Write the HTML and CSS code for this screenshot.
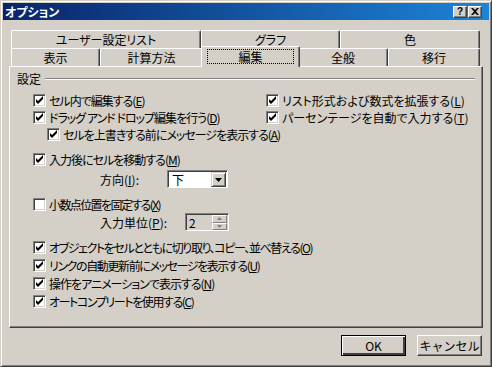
FILE: index.html
```html
<!DOCTYPE html>
<html lang="ja">
<head>
    <meta charset="UTF-8">
    <title>オプション</title>
    <link rel="stylesheet" href="styles.css">
</head>
<body>

    <div class="window">
        <!-- Barra de título -->
        <div class="titlebar">
            <span class="title">オプション</span>
            <div class="caption-buttons">
                <span class="cap-btn">?</span>
                <span class="cap-btn">
                    <svg width="8" height="7" viewBox="0 0 8 7"><path d="M0 0h2l2 2 2-2h2L5 3.5 8 7H6L4 5 2 7H0l3-3.5z" fill="#000"/></svg>
                </span>
            </div>
        </div>

        <!-- Pestañas -->
        <div class="tabs">
            <div class="tab-row">
                <div class="tab w190">ユーザー設定リスト</div>
                <div class="tab w139">グラフ</div>
                <div class="tab w140">色</div>
            </div>
            <div class="tab-row">
                <div class="tab w89">表示</div>
                <div class="tab w103">計算方法</div>
                <div class="tab w95 activa"><span class="foco">編集</span></div>
                <div class="tab w90">全般</div>
                <div class="tab w92">移行</div>
            </div>
        </div>

        <!-- Panel principal -->
        <div class="panel">
            <div class="grupo">
                <span>設定</span>
                <div class="linea"></div>
            </div>

            <div class="arriba">
                <div class="col-izq">
                    <div class="fila"><span class="check on"></span>セル内で編集する(<u>E</u>)</div>
                    <div class="fila"><span class="check on"></span>ドラッグ アンド ドロップ編集を行う(<u>D</u>)</div>
                    <div class="fila sangria"><span class="check on"></span>セルを上書きする前にメッセージを表示する(<u>A</u>)</div>
                </div>
                <div class="col-der">
                    <div class="fila"><span class="check on"></span>リスト形式および数式を拡張する(<u>L</u>)</div>
                    <div class="fila"><span class="check on"></span>パーセンテージを自動で入力する(<u>T</u>)</div>
                </div>
            </div>

            <div class="fila mt8"><span class="check on"></span>入力後にセルを移動する(<u>M</u>)</div>
            <div class="campo mt2">
                <span class="etiqueta e67">方向(<u>I</u>):</span>
                <div class="combo">
                    <span class="combo-valor">下</span>
                    <span class="combo-btn">
                        <svg width="7" height="4" viewBox="0 0 7 4"><path d="M0 0h7L3.5 4z" fill="#000"/></svg>
                    </span>
                </div>
            </div>

            <div class="fila mt8 muy-apretado"><span class="check"></span>小数点位置を固定する(<u>X</u>)</div>
            <div class="campo">
                <span class="etiqueta e85">入力単位(<u>P</u>):</span>
                <div class="spin">
                    <span class="spin-valor">2</span>
                    <div class="spin-btns">
                        <span class="spin-btn"><svg width="5" height="3" viewBox="0 0 5 3"><path d="M2.5 0L5 3H0z" fill="#808080"/></svg></span>
                        <span class="spin-btn"><svg width="5" height="3" viewBox="0 0 5 3"><path d="M0 0h5L2.5 3z" fill="#808080"/></svg></span>
                    </div>
                </div>
            </div>

            <div class="lista mt7">
                <div class="fila apretado"><span class="check on"></span>オブジェクトをセルとともに切り取り、コピー、並べ替える(<u>O</u>)</div>
                <div class="fila apretado"><span class="check on"></span>リンクの自動更新前にメッセージを表示する(<u>U</u>)</div>
                <div class="fila"><span class="check on"></span>操作をアニメーションで表示する(<u>N</u>)</div>
                <div class="fila apretado"><span class="check on"></span>オートコンプリートを使用する(<u>C</u>)</div>
            </div>
        </div>

        <!-- Botones -->
        <div class="botones">
            <button class="boton defecto">OK</button>
            <button class="boton">キャンセル</button>
        </div>
    </div>

</body>
</html>
```

FILE: styles.css
```css
body {
    margin: 0;
    font-family: "Noto Sans CJK JP", "Liberation Sans", sans-serif;
    font-size: 12px;
    font-feature-settings: "palt";
    color: #000;
}
.window {
    width: 492px;
    height: 367px;
    box-sizing: border-box;
    background-color: #d4d0c8;
    border: 1px solid;
    border-color: #d4d0c8 #404040 #404040 #d4d0c8;
    box-shadow: inset 1px 1px #fff, inset -1px -1px #808080;
    padding: 2px;
    display: flex;
    flex-direction: column;
}
.titlebar {
    height: 17px;
    display: flex;
    align-items: center;
    justify-content: space-between;
    background: linear-gradient(to right, #0a246a, #1c84d8);
}
.title {
    color: #fff;
    font-weight: bold;
    padding-left: 2px;
    line-height: 17px;
}
.caption-buttons {
    display: flex;
    margin-right: 7px;
    gap: 1px;
}
.cap-btn {
    width: 14px;
    height: 12px;
    box-sizing: border-box;
    background-color: #d4d0c8;
    border: 1px solid;
    border-color: #fff #404040 #404040 #fff;
    box-shadow: inset -1px -1px #808080;
    display: flex;
    align-items: center;
    justify-content: center;
    font-family: "Liberation Sans", sans-serif;
    font-weight: bold;
    font-size: 10px;
    line-height: 10px;
}
.tabs {
    margin: 10px 0 0 8px;
}
.tab-row {
    display: flex;
    height: 18px;
}
.tab {
    box-sizing: border-box;
    height: 18px;
    border-top: 1px solid #fff;
    border-left: 1px solid #fff;
    border-right: 1px solid #404040;
    box-shadow: inset -1px 0 #808080;
    border-radius: 2px 2px 0 0;
    text-align: center;
    line-height: 17px;
}
.w190 { width: 190px; }
.w139 { width: 139px; }
.w140 { width: 140px; }
.w89 { width: 89px; }
.w103 { width: 103px; }
.w95 { width: 95px; }
.w90 { width: 90px; }
.w92 { width: 92px; }
.tab.activa {
    position: relative;
    z-index: 1;
    width: 99px;
    height: 21px;
    margin: -2px -2px -1px -2px;
    background-color: #d4d0c8;
    padding: 2px 5px 0 5px;
}
.foco {
    display: block;
    border: 1px dotted #000;
    line-height: 13px;
}
.panel {
    width: 474px;
    height: 262px;
    box-sizing: border-box;
    margin-left: 6px;
    border: 1px solid;
    border-color: #fff #404040 #404040 #fff;
    box-shadow: inset -1px -1px #808080;
    padding: 5px 0 0 7px;
}
.grupo {
    display: flex;
    align-items: center;
    height: 14px;
    line-height: 14px;
}
.linea {
    flex: 1;
    margin: 0 7px 0 4px;
    border-top: 1px solid #808080;
    border-bottom: 1px solid #fff;
}
.arriba {
    display: flex;
    margin-top: 6px;
}
.col-izq {
    width: 249px;
}
.fila {
    display: flex;
    align-items: center;
    height: 17px;
    padding-left: 16px;
    white-space: nowrap;
    letter-spacing: -1px;
}
.fila.apretado {
    letter-spacing: -1.4px;
}
.fila.muy-apretado {
    letter-spacing: -1.6px;
}
.col-der .fila {
    padding-left: 0;
    letter-spacing: 0;
}
.fila.sangria {
    padding-left: 30px;
}
.check {
    width: 13px;
    height: 13px;
    box-sizing: border-box;
    flex: none;
    margin-right: 3px;
    background-color: #fff;
    border: 1px solid;
    border-color: #808080 #fff #fff #808080;
    box-shadow: inset 1px 1px #404040, inset -1px -1px #d4d0c8;
}
.check.on {
    background-image: url("data:image/svg+xml,%3Csvg xmlns='http://www.w3.org/2000/svg' width='11' height='11'%3E%3Cpath d='M2 4v3l2 2 5-5V1L4 6z' fill='%23000'/%3E%3C/svg%3E");
    background-repeat: no-repeat;
}
.mt8 { margin-top: 8px; }
.mt7 { margin-top: 7px; }
.mt2 { margin-top: 2px; }
.campo {
    display: flex;
    align-items: center;
    padding-left: 83px;
    height: 18px;
}
.etiqueta {
    white-space: nowrap;
}
.e67 { width: 67px; }
.e85 { width: 85px; }
.combo {
    width: 61px;
    height: 18px;
    box-sizing: border-box;
    display: flex;
    background-color: #fff;
    border: 1px solid;
    border-color: #808080 #fff #fff #808080;
    box-shadow: inset 1px 1px #404040;
    padding: 1px 1px 0 1px;
}
.combo-valor {
    flex: 1;
    padding-left: 3px;
    line-height: 15px;
}
.combo-btn {
    width: 15px;
    height: 15px;
    box-sizing: border-box;
    background-color: #d4d0c8;
    border: 1px solid;
    border-color: #d4d0c8 #404040 #404040 #d4d0c8;
    box-shadow: inset 1px 1px #fff, inset -1px -1px #808080;
    display: flex;
    align-items: center;
    justify-content: center;
}
.spin {
    width: 44px;
    height: 18px;
    box-sizing: border-box;
    display: flex;
    background-color: #d4d0c8;
    border: 1px solid;
    border-color: #808080 #fff #fff #808080;
    box-shadow: inset 1px 1px #404040;
    padding: 1px 1px 0 1px;
}
.spin-valor {
    flex: 1;
    padding-left: 2px;
    line-height: 15px;
}
.spin-btns {
    display: flex;
    flex-direction: column;
    width: 15px;
}
.spin-btn {
    height: 8px;
    box-sizing: border-box;
    border: 1px solid;
    border-color: #fff #808080 #808080 #fff;
    display: flex;
    align-items: center;
    justify-content: center;
}
.lista .fila {
    height: 18px;
}
.botones {
    display: flex;
    justify-content: flex-end;
    gap: 11px;
    margin: 7px 7px 0 0;
}
.boton {
    width: 65px;
    height: 21px;
    box-sizing: border-box;
    font-family: inherit;
    font-size: 12px;
    background-color: #d4d0c8;
    color: #000;
    border: 1px solid;
    border-color: #fff #404040 #404040 #fff;
    box-shadow: inset -1px -1px #808080;
    padding: 0;
}
.boton.defecto {
    border-color: #000;
    box-shadow: inset 1px 1px #fff, inset -2px -2px #404040;
}
```
